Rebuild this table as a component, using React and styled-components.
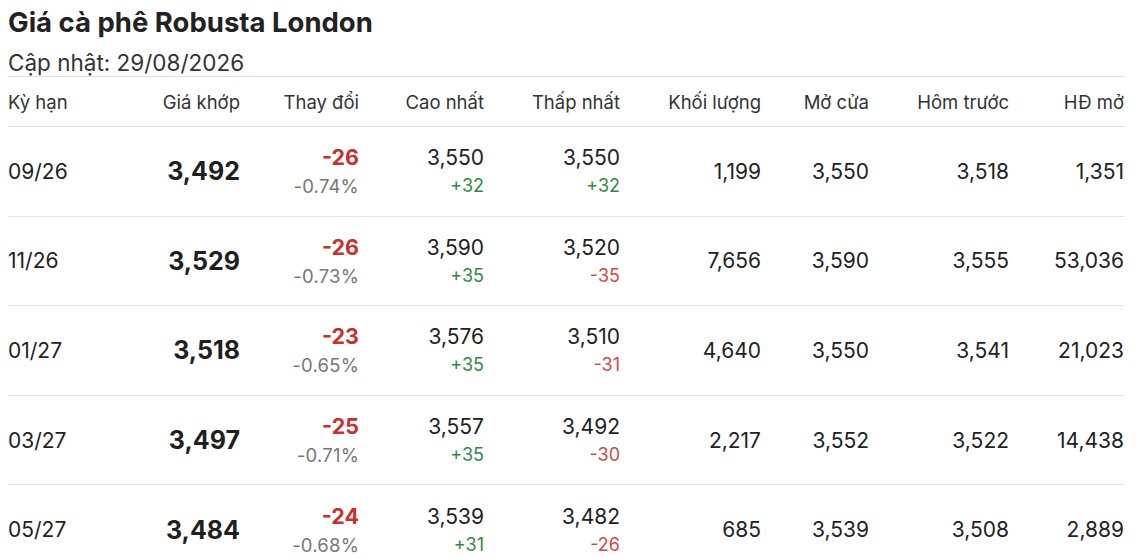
import React from "react";
import styled, { createGlobalStyle } from "styled-components";

const Global = createGlobalStyle`
  html, body { margin: 0; padding: 0; background: #fff; }
  body { font-family: Inter, "Noto Sans", sans-serif; color: #222; }
`;

const Page = styled.div`
  padding: 0 14px 0 8px;
`;

const Title = styled.h1`
  margin: 0;
  padding-top: 6px;
  font-size: 27.5px;
  line-height: 33px;
  font-weight: 700;
  color: #222;
`;

const Updated = styled.div`
  margin-top: 10px;
  font-size: 22.5px;
  line-height: 27px;
  color: #333;
`;

const Table = styled.div`
  border-top: 1px solid #e2e2e2;
`;

const COLS = "112px 120px 119px 125px 136px 141px 108px 140px 115px";

const HeadRow = styled.div`
  display: grid;
  grid-template-columns: ${COLS};
  height: 49px;
  align-items: center;
  border-bottom: 1px solid #dcdcdc;
`;

const HeadCell = styled.div`
  font-size: 18.5px;
  color: #333;
  text-align: ${(p) => (p.$left ? "left" : "right")};
`;

const Row = styled.div`
  display: grid;
  grid-template-columns: ${COLS};
  height: 88.6px;
  align-items: center;
  border-bottom: 1px solid #e4e4e4;
`;

const Cell = styled.div`
  text-align: ${(p) => (p.$left ? "left" : "right")};
  font-size: 21px;
  color: #222;
`;

const Stack = styled.div`
  display: flex;
  flex-direction: column;
  align-items: flex-end;
  gap: 5px;
`;

const Price = styled.div`
  font-size: 25px;
  font-weight: 700;
  color: #1f1f1f;
`;

const Change = styled.div`
  font-size: 21.5px;
  font-weight: 700;
  color: #c9302c;
  line-height: 25px;
`;

const Pct = styled.div`
  font-size: 18.5px;
  color: #777;
  line-height: 22px;
  letter-spacing: 0.2px;
`;

const Val = styled.div`
  font-size: 21px;
  color: #222;
  line-height: 25px;
`;

const Diff = styled.div`
  font-size: 18px;
  line-height: 22px;
  color: ${(p) => (p.$up ? "#2f8a46" : "#d04a45")};
`;

const rows = [
  ["09/26", "3,492", "-26", "-0.74%", "3,550", "+32", "3,550", "+32", "1,199", "3,550", "3,518", "1,351"],
  ["11/26", "3,529", "-26", "-0.73%", "3,590", "+35", "3,520", "-35", "7,656", "3,590", "3,555", "53,036"],
  ["01/27", "3,518", "-23", "-0.65%", "3,576", "+35", "3,510", "-31", "4,640", "3,550", "3,541", "21,023"],
  ["03/27", "3,497", "-25", "-0.71%", "3,557", "+35", "3,492", "-30", "2,217", "3,552", "3,522", "14,438"],
  ["05/27", "3,484", "-24", "-0.68%", "3,539", "+31", "3,482", "-26", "685", "3,539", "3,508", "2,889"],
];

const heads = ["Kỳ hạn", "Giá khớp", "Thay đổi", "Cao nhất", "Thấp nhất", "Khối lượng", "Mở cửa", "Hôm trước", "HĐ mở"];

export default function App() {
  return (
    <Page>
      <Global />
      <Title>Giá cà phê Robusta London</Title>
      <Updated>Cập nhật: 29/08/2026</Updated>
      <Table>
        <HeadRow>
          {heads.map((h, i) => (
            <HeadCell key={h} $left={i === 0}>{h}</HeadCell>
          ))}
        </HeadRow>
        {rows.map((r) => (
          <Row key={r[0]}>
            <Cell $left>{r[0]}</Cell>
            <Cell><Price>{r[1]}</Price></Cell>
            <Cell>
              <Stack>
                <Change>{r[2]}</Change>
                <Pct>{r[3]}</Pct>
              </Stack>
            </Cell>
            <Cell>
              <Stack>
                <Val>{r[4]}</Val>
                <Diff $up={r[5].startsWith("+")}>{r[5]}</Diff>
              </Stack>
            </Cell>
            <Cell>
              <Stack>
                <Val>{r[6]}</Val>
                <Diff $up={r[7].startsWith("+")}>{r[7]}</Diff>
              </Stack>
            </Cell>
            <Cell>{r[8]}</Cell>
            <Cell>{r[9]}</Cell>
            <Cell>{r[10]}</Cell>
            <Cell>{r[11]}</Cell>
          </Row>
        ))}
      </Table>
    </Page>
  );
}
